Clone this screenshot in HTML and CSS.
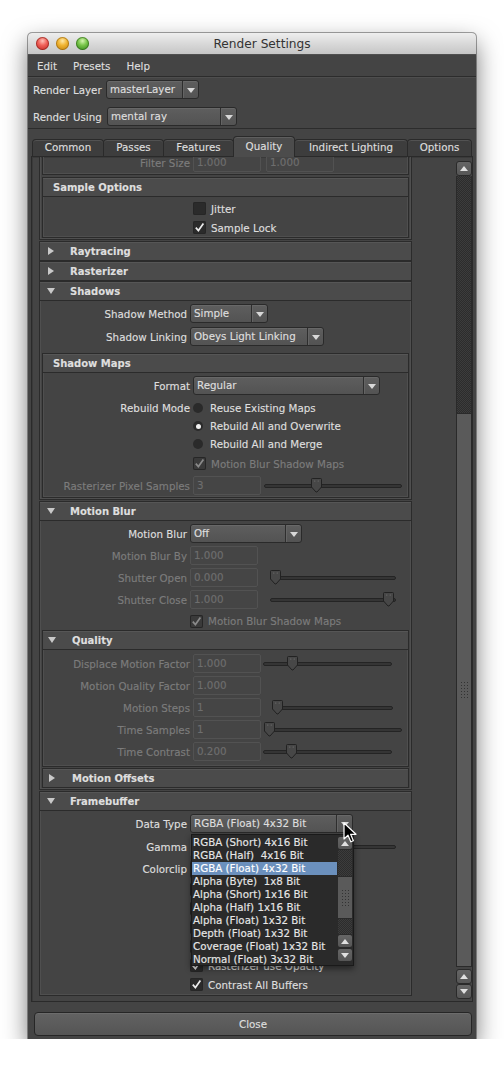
FILE: index.html
```html
<!DOCTYPE html>
<html>
<head>
<meta charset="utf-8">
<link rel="stylesheet" href="styles.css">
</head>
<body>
<div class="win">
  <div class="titlebar">
    <div class="lights"><span class="light red"></span><span class="light yellow"></span><span class="light green"></span></div>
    <div class="title">Render Settings</div>
    <div></div>
  </div>
  <div class="menubar"><span>Edit</span><span>Presets</span><span>Help</span></div>
  <div class="toolbar">
    <div class="trow"><span class="tlabel">Render Layer</span><div class="dd w-layer"><span class="val">masterLayer</span><span class="arr"></span></div></div>
    <div class="trow second"><span class="tlabel">Render Using</span><div class="dd w-using"><span class="val">mental ray</span><span class="arr"></span></div></div>
  </div>
  <div class="tabs">
    <div class="tab t-common">Common</div>
    <div class="tab t-passes">Passes</div>
    <div class="tab t-features">Features</div>
    <div class="tab active t-quality">Quality</div>
    <div class="tab t-indirect">Indirect Lighting</div>
    <div class="tab t-options">Options</div>
  </div>
  <div class="panel">
    <div class="content">
      <!-- Antialiasing (partial) -->
      <div class="sec">
        <div class="body">
          <div class="sub cut">
            <div class="sbody pad-cut">
              <div class="row r19"><span class="lbl dis">Filter Size</span><span class="fld">1.000</span><span class="fld second">1.000</span></div>
            </div>
          </div>
          <div class="sub">
            <div class="shdr plain">Sample Options</div>
            <div class="sbody pad-sample">
              <div class="row r19"><span class="lbl"></span><span class="cb"></span><span class="ctext">Jitter</span></div>
              <div class="row r19"><span class="lbl"></span><span class="cb"><svg class="ck" viewBox="0 0 13 13"><path d="M2.8 6.6 5.4 9.6 10.4 2.6"/></svg></span><span class="ctext">Sample Lock</span></div>
            </div>
          </div>
        </div>
      </div>

      <div class="sec"><div class="hdr"><span class="tri"><i class="tri-r"></i></span><span class="htext">Raytracing</span></div></div>
      <div class="sec"><div class="hdr"><span class="tri"><i class="tri-r"></i></span><span class="htext">Rasterizer</span></div></div>

      <!-- Shadows -->
      <div class="sec">
        <div class="hdr"><span class="tri"><i class="tri-d"></i></span><span class="htext">Shadows</span></div>
        <div class="body pad-3">
          <div class="row r19"><span class="lbl">Shadow Method</span><div class="dd w-method"><span class="val">Simple</span><span class="arr"></span></div></div>
          <div class="row r19 mt4"><span class="lbl">Shadow Linking</span><div class="dd w-linking"><span class="val">Obeys Light Linking</span><span class="arr"></span></div></div>
          <div class="sub mt7">
            <div class="shdr plain">Shadow Maps</div>
            <div class="sbody pad-maps">
              <div class="row r19"><span class="lbl">Format</span><div class="dd w-format"><span class="val">Regular</span><span class="arr"></span></div></div>
              <div class="row r18 mt4"><span class="lbl">Rebuild Mode</span><span class="rb"></span><span class="rtext">Reuse Existing Maps</span></div>
              <div class="row r18"><span class="lbl"></span><span class="rb on"></span><span class="rtext">Rebuild All and Overwrite</span></div>
              <div class="row r18"><span class="lbl"></span><span class="rb"></span><span class="rtext">Rebuild All and Merge</span></div>
              <div class="row r19 mt1"><span class="lbl"></span><span class="cb dcb"><svg class="ck" viewBox="0 0 13 13"><path d="M2.8 6.6 5.4 9.6 10.4 2.6"/></svg></span><span class="ctext dis">Motion Blur Shadow Maps</span></div>
              <div class="row r19 mt3"><span class="lbl dis">Rasterizer Pixel Samples</span><span class="fld">3</span><div class="sld sld-a"><div class="track"></div><svg class="thumb" style="left:47px" viewBox="0 0 11 15"><path d="M1.5.5h8a1 1 0 0 1 1 1V9L6 14H5L.5 9V1.5a1 1 0 0 1 1-1z"/><circle cx="3.8" cy="3" r=".6"/><circle cx="7.2" cy="3" r=".6"/></svg></div></div>
            </div>
          </div>
        </div>
      </div>

      <!-- Motion Blur -->
      <div class="sec">
        <div class="hdr"><span class="tri"><i class="tri-d"></i></span><span class="htext">Motion Blur</span></div>
        <div class="body pad-3">
          <div class="row r19"><span class="lbl">Motion Blur</span><div class="dd w-mb"><span class="val">Off</span><span class="arr"></span></div></div>
          <div class="row r19 mt3"><span class="lbl dis">Motion Blur By</span><span class="fld">1.000</span></div>
          <div class="row r19 mt3"><span class="lbl dis">Shutter Open</span><span class="fld">0.000</span><div class="sld sld-b"><div class="track"></div><svg class="thumb" style="left:0px" viewBox="0 0 11 15"><path d="M1.5.5h8a1 1 0 0 1 1 1V9L6 14H5L.5 9V1.5a1 1 0 0 1 1-1z"/><circle cx="3.8" cy="3" r=".6"/><circle cx="7.2" cy="3" r=".6"/></svg></div></div>
          <div class="row r19 mt3"><span class="lbl dis">Shutter Close</span><span class="fld">1.000</span><div class="sld sld-b"><div class="track"></div><svg class="thumb" style="left:113px" viewBox="0 0 11 15"><path d="M1.5.5h8a1 1 0 0 1 1 1V9L6 14H5L.5 9V1.5a1 1 0 0 1 1-1z"/><circle cx="3.8" cy="3" r=".6"/><circle cx="7.2" cy="3" r=".6"/></svg></div></div>
          <div class="row r18 mt3"><span class="lbl"></span><span class="cb dcb"><svg class="ck" viewBox="0 0 13 13"><path d="M2.8 6.6 5.4 9.6 10.4 2.6"/></svg></span><span class="ctext dis">Motion Blur Shadow Maps</span></div>
          <div class="sub">
            <div class="shdr"><span class="tri"><i class="tri-d"></i></span><span class="htext">Quality</span></div>
            <div class="sbody pad-quality">
              <div class="row r19"><span class="lbl dis">Displace Motion Factor</span><span class="fld">1.000</span><div class="sld sld-c"><div class="track"></div><svg class="thumb" style="left:24px" viewBox="0 0 11 15"><path d="M1.5.5h8a1 1 0 0 1 1 1V9L6 14H5L.5 9V1.5a1 1 0 0 1 1-1z"/><circle cx="3.8" cy="3" r=".6"/><circle cx="7.2" cy="3" r=".6"/></svg></div></div>
              <div class="row r19 mt3"><span class="lbl dis">Motion Quality Factor</span><span class="fld">1.000</span></div>
              <div class="row r19 mt3"><span class="lbl dis">Motion Steps</span><span class="fld">1</span><div class="sld sld-d"><div class="track"></div><svg class="thumb" style="left:0px" viewBox="0 0 11 15"><path d="M1.5.5h8a1 1 0 0 1 1 1V9L6 14H5L.5 9V1.5a1 1 0 0 1 1-1z"/><circle cx="3.8" cy="3" r=".6"/><circle cx="7.2" cy="3" r=".6"/></svg></div></div>
              <div class="row r19 mt3"><span class="lbl dis">Time Samples</span><span class="fld">1</span><div class="sld sld-a"><div class="track"></div><svg class="thumb" style="left:0px" viewBox="0 0 11 15"><path d="M1.5.5h8a1 1 0 0 1 1 1V9L6 14H5L.5 9V1.5a1 1 0 0 1 1-1z"/><circle cx="3.8" cy="3" r=".6"/><circle cx="7.2" cy="3" r=".6"/></svg></div></div>
              <div class="row r19 mt3"><span class="lbl dis">Time Contrast</span><span class="fld">0.200</span><div class="sld sld-c"><div class="track"></div><svg class="thumb" style="left:23px" viewBox="0 0 11 15"><path d="M1.5.5h8a1 1 0 0 1 1 1V9L6 14H5L.5 9V1.5a1 1 0 0 1 1-1z"/><circle cx="3.8" cy="3" r=".6"/><circle cx="7.2" cy="3" r=".6"/></svg></div></div>
            </div>
          </div>
          <div class="sub">
            <div class="shdr"><span class="tri"><i class="tri-r"></i></span><span class="htext">Motion Offsets</span></div>
          </div>
        </div>
      </div>

      <!-- Framebuffer -->
      <div class="sec">
        <div class="hdr"><span class="tri"><i class="tri-d"></i></span><span class="htext">Framebuffer</span></div>
        <div class="body pad-fb">
          <div class="row r19"><span class="lbl">Data Type</span><div class="dd w-dtype"><span class="val">RGBA (Float) 4x32 Bit</span><span class="arr"></span></div></div>
          <div class="row r22 mt3"><span class="lbl">Gamma</span><span class="fld"></span><div class="sld sld-b"><div class="track"></div></div></div>
          <div class="row r22"><span class="lbl">Colorclip</span><div class="dd w-clip"><span class="val"></span><span class="arr"></span></div></div>
          <div class="row r19"><span class="lbl"></span><span class="cb"></span></div>
          <div class="row r19"><span class="lbl"></span><span class="cb"></span></div>
          <div class="row r19"><span class="lbl"></span><span class="cb"></span></div>
          <div class="row r19"><span class="lbl"></span><span class="cb"></span></div>
          <div class="row r19"><span class="lbl"></span><span class="cb"><svg class="ck" viewBox="0 0 13 13"><path d="M2.8 6.6 5.4 9.6 10.4 2.6"/></svg></span><span class="ctext">Rasterizer use Opacity</span></div>
          <div class="row r19"><span class="lbl"></span><span class="cb"><svg class="ck" viewBox="0 0 13 13"><path d="M2.8 6.6 5.4 9.6 10.4 2.6"/></svg></span><span class="ctext">Contrast All Buffers</span></div>
        </div>
      </div>
    </div>

    <div class="vscroll">
      <div class="sbtn"><i class="up"></i></div>
      <div class="strack t1"></div>
      <div class="sthumb"><div class="grip"></div></div>
      <div class="sbtn gap"><i class="up"></i></div>
      <div class="sbtn"><i class="down"></i></div>
    </div>
  </div>
  <div class="closebar"><div class="closebtn">Close</div></div>

  <div class="popup">
    <div class="plist">
      <div class="pitem">RGBA (Short) 4x16 Bit</div>
      <div class="pitem">RGBA (Half)  4x16 Bit</div>
      <div class="pitem sel">RGBA (Float) 4x32 Bit</div>
      <div class="pitem">Alpha (Byte)  1x8 Bit</div>
      <div class="pitem">Alpha (Short) 1x16 Bit</div>
      <div class="pitem">Alpha (Half) 1x16 Bit</div>
      <div class="pitem">Alpha (Float) 1x32 Bit</div>
      <div class="pitem">Depth (Float) 1x32 Bit</div>
      <div class="pitem">Coverage (Float) 1x32 Bit</div>
      <div class="pitem">Normal (Float) 3x32 Bit</div>
    </div>
    <div class="pscroll">
      <div class="sbtn"><i class="up"></i></div>
      <div class="strack p1"></div>
      <div class="sthumb pthumb"><div class="grip"></div></div>
      <div class="strack p2"></div>
      <div class="sbtn"><i class="up"></i></div>
      <div class="sbtn"><i class="down"></i></div>
    </div>
  </div>

  <svg class="cursor" viewBox="0 0 14 22" width="14" height="22"><path d="M1 1v16l4-3.8 2.8 6.6 2.6-1.1-2.8-6.4H13z" fill="#000" stroke="#fff" stroke-width="1.2" stroke-linejoin="round"/></svg>
</div>
</body>
</html>
```

FILE: styles.css
```css
* { box-sizing: border-box; }
html, body { margin: 0; padding: 0; background: #ffffff; }
body {
  font-family: "DejaVu Sans", "Liberation Sans", sans-serif;
  font-size: 10.3px;
  color: #dedede;
  -webkit-text-stroke: 0.15px currentColor;
}
.win {
  position: relative;
  width: 448px;
  height: 1006px;
  margin: 33px 0 0 28px;
  background: #444444;
  border-radius: 4px 4px 0 0;
  box-shadow: 0 10px 24px rgba(0,0,0,0.55), 0 0 0 1px rgba(0,0,0,0.35);
  display: flex;
  flex-direction: column;
}

/* title bar */
.titlebar {
  flex: none;
  height: 22px;
  display: grid;
  grid-template-columns: 1fr auto 1fr;
  align-items: center;
  background: linear-gradient(#eeeeee, #d9d9d9 50%, #c6c6c6);
  border-bottom: 1px solid #505050;
  border-radius: 4px 4px 0 0;
}
.lights { display: flex; gap: 7px; padding-left: 8px; }
.light { width: 13px; height: 13px; border-radius: 50%; }
.red { background: radial-gradient(circle at 50% 30%, #ffc1b8 0, #f0625a 40%, #c9302a 85%); box-shadow: inset 0 0 0 1px rgba(120,20,15,0.55); }
.yellow { background: radial-gradient(circle at 50% 30%, #ffe9a8 0, #f1b533 40%, #c98a12 85%); box-shadow: inset 0 0 0 1px rgba(130,80,0,0.5); }
.green { background: radial-gradient(circle at 50% 30%, #d4f5b0 0, #79c64a 40%, #3e8f22 85%); box-shadow: inset 0 0 0 1px rgba(30,80,10,0.5); }
.title { font-size: 12.2px; color: #333; padding-left: 20px; -webkit-text-stroke: 0; }

/* menu */
.menubar {
  flex: none;
  height: 22px;
  display: flex;
  align-items: center;
  gap: 16px;
  padding-left: 9px;
  border-bottom: 1px solid #2c2c2c;
}

/* toolbar */
.toolbar {
  flex: none;
  height: 52px;
  padding: 2px 0 0 5px;
  border-top: 1px solid #4e4e4e;
  border-bottom: 1px solid #2c2c2c;
}
.trow { display: flex; align-items: center; height: 19px; }
.trow.second { margin-top: 8px; }
.tlabel { width: 73px; flex: none; }
.trow.second .tlabel { width: 74px; }

/* dropdown */
.dd {
  display: flex;
  height: 19px;
  flex: none;
  border: 1px solid #2a2a2a;
  border-radius: 3px;
  background: linear-gradient(#5e5e5e, #535353);
  box-shadow: inset 0 1px 0 #686868;
}
.dd .val { flex: 1; padding-left: 3px; line-height: 17px; white-space: nowrap; overflow: hidden; }
.dd .arr { width: 16px; flex: none; border-left: 1px solid #2e2e2e; box-shadow: inset 1px 0 0 #646464; display: flex; align-items: center; justify-content: center; }
.dd .arr::after { content: ""; border-left: 4px solid transparent; border-right: 4px solid transparent; border-top: 5px solid #d8d8d8; margin-top: 1px; }
.w-layer { width: 93px; }
.w-using { width: 130px; }
.w-method { width: 78px; }
.w-linking { width: 134px; }
.w-format { width: 187px; }
.w-mb { width: 112px; }
.w-dtype { width: 163px; }
.w-clip { width: 68px; }

/* tabs */
.tabs {
  flex: none;
  height: 20px;
  margin-top: 7px;
  padding-left: 4px;
  display: flex;
  align-items: flex-end;
}
.tab {
  flex: none;
  height: 17px;
  line-height: 15px;
  text-align: center;
  background: #3d3d3d;
  border: 1px solid #2a2a2a;
  border-bottom: none;
  border-radius: 4px 4px 0 0;
  box-shadow: inset 0 1px 0 #525252;
  margin-right: -1px;
}
.tab.active {
  height: 21px;
  line-height: 19px;
  background: #4c4c4c;
  margin-bottom: -1px;
  position: relative;
  z-index: 1;
  box-shadow: inset 0 1px 0 #5e5e5e;
}
.t-common { width: 72px; }
.t-passes { width: 61px; }
.t-features { width: 71px; }
.t-quality { width: 62px; }
.t-indirect { width: 114px; }
.t-options { width: 65px; }

/* panel */
.panel {
  flex: none;
  height: 846px;
  margin: 0 3px;
  border: 1px solid #2a2a2a;
  box-shadow: inset 1px 1px 0 #3a3a3a;
  display: flex;
  overflow: hidden;
}
.content {
  flex: 1;
  padding-left: 7px;
  overflow: hidden;
}
.content > .sec { width: 373px; }

/* sections */
.sec { margin: 0; }
.hdr {
  height: 20px;
  display: flex;
  align-items: center;
  padding-left: 6px;
  background: #4b4b4b;
  border: 1px solid #2b2b2b;
  box-shadow: inset 0 1px 0 #565656;
  font-weight: bold;
  font-size: 10px;
}
.tri { width: 10px; flex: none; display: flex; justify-content: center; align-items: center; }
.tri-r { display: block; border-top: 4.5px solid transparent; border-bottom: 4.5px solid transparent; border-left: 6px solid #c9c9c9; }
.tri-d { display: block; border-left: 4.5px solid transparent; border-right: 4.5px solid transparent; border-top: 6px solid #c9c9c9; }
.htext { margin-left: 14px; }
.body {
  border: 1px solid #2b2b2b;
  border-top: none;
  box-shadow: inset 1px 0 0 #4f4f4f, inset -1px -1px 0 #4f4f4f;
  margin-bottom: 1px;
}
.pad-3 { padding-top: 3px; }
.pad-fb { padding-top: 3px; padding-bottom: 1px; }

.sub { margin: 0 2px 1px; }
.sub.cut { margin-top: -8px; margin-bottom: 2px; }
.shdr {
  height: 20px;
  display: flex;
  align-items: center;
  padding-left: 4px;
  background: #4b4b4b;
  border: 1px solid #2b2b2b;
  box-shadow: inset 0 1px 0 #565656;
  font-weight: bold;
  font-size: 10px;
}
.shdr .htext { margin-left: 15px; }
.shdr.plain { padding-left: 10px; }
.sbody {
  border: 1px solid #2b2b2b;
  border-top: none;
  box-shadow: inset 1px 0 0 #4f4f4f, inset -1px -1px 0 #4f4f4f;
}
.pad-cut { border-top: 1px solid #2b2b2b; padding: 3px 0 2px; }
.pad-sample { padding-top: 2px; }
.pad-maps { padding: 3px 0 2px; }
.pad-quality { padding: 4px 0 5px; }
.mt1 { margin-top: 1px; }
.mt3 { margin-top: 3px; }
.mt4 { margin-top: 4px; }
.mt7 { margin-top: 7px; }

/* rows */
.row { display: flex; align-items: center; }
.r18 { height: 18px; }
.r19 { height: 19px; }
.r22 { height: 22px; }
.lbl { width: 150px; flex: none; text-align: right; padding-right: 3px; white-space: nowrap; }
.dis { color: #7c7c7c; }

.fld {
  width: 68px;
  height: 19px;
  flex: none;
  border: 1px solid #525252;
  border-radius: 2px;
  background: #454545;
  color: #6e6e6e;
  padding-left: 3px;
  line-height: 17px;
}
.fld.second { margin-left: 5px; }

.cb {
  width: 13px;
  height: 13px;
  flex: none;
  border-radius: 2px;
  background: #2b2b2b;
  box-shadow: inset 0 0 0 1px #262626;
  margin-right: 5px;
}
.cb.dcb { background: #3a3a3a; }
.ck { display: block; width: 13px; height: 13px; }
.ck path { fill: none; stroke: #ececec; stroke-width: 1.7; }
.dcb .ck path { stroke: #8a8a8a; }
.ctext { white-space: nowrap; }

.rb {
  width: 10px;
  height: 10px;
  flex: none;
  border-radius: 50%;
  background: #2a2a2a;
  margin-right: 7px;
  display: flex;
  align-items: center;
  justify-content: center;
}
.rb.on::after { content: ""; width: 5px; height: 5px; border-radius: 50%; background: #f0f0f0; }

/* sliders */
.sld { position: relative; height: 19px; flex: none; display: flex; align-items: center; }
.sld-a { margin-left: 3px; width: 138px; }
.sld-b { margin-left: 12px; width: 126px; }
.sld-c { margin-left: 2px; width: 129px; }
.sld-d { margin-left: 11px; width: 121px; }
.track { width: 100%; height: 4px; border-radius: 2px; background: #353535; border: 1px solid #242424; }
.thumb { position: absolute; top: 2px; width: 11px; height: 15px; }
.thumb path { fill: #474747; stroke: #222; stroke-width: 1; }
.thumb circle { fill: #777; }

/* scrollbars */
.vscroll {
  width: 16px;
  flex: none;
  display: flex;
  flex-direction: column;
  padding-top: 4px;
}
.sbtn {
  height: 15px;
  flex: none;
  border: 1px solid #2a2a2a;
  border-radius: 3px;
  background: linear-gradient(#656565, #565656);
  display: flex;
  align-items: center;
  justify-content: center;
}
.sbtn.gap { margin-top: 2px; }
.sbtn .up { display: block; border-left: 4px solid transparent; border-right: 4px solid transparent; border-bottom: 5px solid #e0e0e0; }
.sbtn .down { display: block; border-left: 4px solid transparent; border-right: 4px solid transparent; border-top: 5px solid #e0e0e0; }
.strack {
  flex: none;
  background: repeating-conic-gradient(#3c3c3c 0 25%, #2c2c2c 0 50%) 0 0 / 2px 2px;
  border-left: 1px solid #2a2a2a;
  border-right: 1px solid #2a2a2a;
}
.strack.t1 { height: 237px; }
.sthumb {
  flex: none;
  height: 554px;
  background: #5a5a5a;
  border: 1px solid #2a2a2a;
  display: flex;
  align-items: center;
  justify-content: center;
}
.grip {
  width: 9px;
  height: 18px;
  background-image: radial-gradient(circle, #333 0.7px, transparent 1px);
  background-size: 3px 3px;
}

/* close */
.closebar { flex: none; padding: 10px 4px 3px 6px; }
.closebtn {
  height: 24px;
  border: 1px solid #262626;
  border-radius: 4px;
  background: linear-gradient(#626262, #555555);
  box-shadow: inset 0 1px 0 #6c6c6c;
  text-align: center;
  line-height: 22px;
}

/* popup */
.popup {
  position: absolute;
  left: 163px;
  top: 801px;
  width: 163px;
  height: 132px;
  background: #2a2a2a;
  border: 1px solid #1a1a1a;
  box-shadow: 0 3px 6px rgba(0,0,0,0.45);
  display: flex;
  z-index: 5;
}
.plist { flex: 1; padding-top: 1px; }
.pitem { height: 13px; line-height: 13px; padding-left: 1px; white-space: pre; color: #e6e6e6; }
.pitem.sel { background: #6b90bd; color: #ffffff; }
.pscroll { width: 16px; flex: none; display: flex; flex-direction: column; padding-top: 1px; }
.pscroll .sbtn { height: 14px; }
.strack.p1 { height: 26px; }
.strack.p2 { height: 15px; }
.pthumb { height: 43px; }

.cursor { position: absolute; left: 315px; top: 789px; z-index: 6; }
```
